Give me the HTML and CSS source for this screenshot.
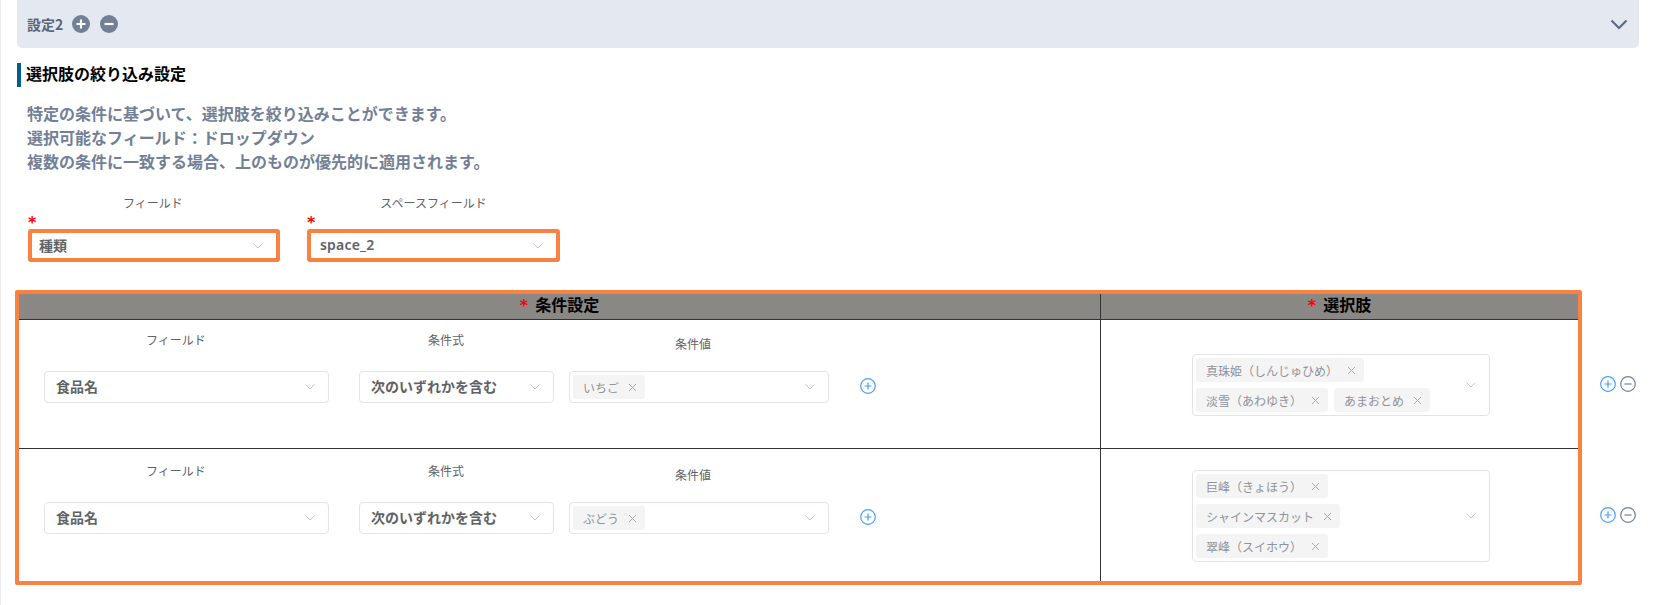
FILE: index.html
```html
<!DOCTYPE html>
<html lang="ja">
<head>
<meta charset="utf-8">
<title>設定</title>
<link rel="stylesheet" href="styles.css">
</head>
<body>
<div class="page">
  <header class="accordion">
    <span class="accordion-title">設定2</span>
    <svg class="round-btn" viewBox="0 0 18 18"><circle cx="9" cy="9" r="9" fill="#718096"/><path d="M9 4.5v9M4.5 9h9" stroke="#fff" stroke-width="2.2"/></svg>
    <svg class="round-btn" viewBox="0 0 18 18"><circle cx="9" cy="9" r="9" fill="#718096"/><path d="M4.5 9h9" stroke="#fff" stroke-width="2.2"/></svg>
    <svg class="accordion-chevron" viewBox="0 0 18 11"><path d="M1.5 1.5 9 9l7.5-7.5" fill="none" stroke="#5d6b82" stroke-width="2.2"/></svg>
  </header>

  <h2 class="section-title">選択肢の絞り込み設定</h2>

  <div class="desc">
    <div>特定の条件に基づいて、選択肢を絞り込みことができます。</div>
    <div>選択可能なフィールド：ドロップダウン</div>
    <div>複数の条件に一致する場合、上のものが優先的に適用されます。</div>
  </div>

  <div class="top-fields">
    <div class="top-field">
      <div class="top-label">フィールド</div>
      <div class="star">*</div>
      <div class="sel sel-hl"><span class="sel-text">種類</span><svg class="chev" viewBox="0 0 10 6"><path d="M.5.5 5 5 9.500.5" fill="none" stroke="#c4c6cc" stroke-width="1"/></svg></div>
    </div>
    <div class="top-field top-field-2">
      <div class="top-label">スペースフィールド</div>
      <div class="star">*</div>
      <div class="sel sel-hl sel-hl-latin"><span class="sel-text sel-latin">space_2</span><svg class="chev" viewBox="0 0 10 6"><path d="M.5.5 5 5 9.500.5" fill="none" stroke="#c4c6cc" stroke-width="1"/></svg></div>
    </div>
  </div>

  <div class="table-area">
    <div class="table">
      <div class="th th-cond"><span class="req">*</span>条件設定</div>
      <div class="th th-choice"><span class="req">*</span>選択肢</div>

      <div class="td td-cond">
        <div class="field f-name">
          <div class="flabel">フィールド</div>
          <div class="sel"><span class="sel-text">食品名</span><svg class="chev" viewBox="0 0 10 6"><path d="M.5.5 5 5 9.500.5" fill="none" stroke="#c4c6cc" stroke-width="1"/></svg></div>
        </div>
        <div class="field f-op">
          <div class="flabel">条件式</div>
          <div class="sel"><span class="sel-text">次のいずれかを含む</span><svg class="chev" viewBox="0 0 10 6"><path d="M.5.5 5 5 9.500.5" fill="none" stroke="#c4c6cc" stroke-width="1"/></svg></div>
        </div>
        <div class="field f-val">
          <div class="flabel flabel-low">条件値</div>
          <div class="sel sel-multi"><span class="tag">いちご<svg class="x" viewBox="0 0 9 9"><path d="M1 1l7 7M8 1 1 8" stroke="#a6a9ad" stroke-width="1"/></svg></span><svg class="chev" viewBox="0 0 10 6"><path d="M.5.5 5 5 9.500.5" fill="none" stroke="#c4c6cc" stroke-width="1"/></svg></div>
        </div>
        <div class="add-wrap">
          <svg class="icon16" viewBox="0 0 16 16"><circle cx="8" cy="8" r="7.3" fill="none" stroke="#4a9ff5" stroke-width="1.2"/><path d="M8 4.500v7M4.500 8h7" stroke="#4a9ff5" stroke-width="1.200"/></svg>
        </div>
      </div>
      <div class="td td-choice td-choice-1">
        <div class="sel sel-choice">
          <div class="tags">
            <span class="tag">真珠姫（しんじゅひめ）<svg class="x" viewBox="0 0 9 9"><path d="M1 1l7 7M8 1 1 8" stroke="#a6a9ad" stroke-width="1"/></svg></span>
            <span class="tag">淡雪（あわゆき）<svg class="x" viewBox="0 0 9 9"><path d="M1 1l7 7M8 1 1 8" stroke="#a6a9ad" stroke-width="1"/></svg></span>
            <span class="tag">あまおとめ<svg class="x" viewBox="0 0 9 9"><path d="M1 1l7 7M8 1 1 8" stroke="#a6a9ad" stroke-width="1"/></svg></span>
          </div>
          <svg class="chev" viewBox="0 0 10 6"><path d="M.5.5 5 5 9.500.5" fill="none" stroke="#c4c6cc" stroke-width="1"/></svg>
        </div>
      </div>

      <div class="td td-cond td-last">
        <div class="field f-name">
          <div class="flabel">フィールド</div>
          <div class="sel"><span class="sel-text">食品名</span><svg class="chev" viewBox="0 0 10 6"><path d="M.5.5 5 5 9.500.5" fill="none" stroke="#c4c6cc" stroke-width="1"/></svg></div>
        </div>
        <div class="field f-op">
          <div class="flabel">条件式</div>
          <div class="sel"><span class="sel-text">次のいずれかを含む</span><svg class="chev" viewBox="0 0 10 6"><path d="M.5.5 5 5 9.500.5" fill="none" stroke="#c4c6cc" stroke-width="1"/></svg></div>
        </div>
        <div class="field f-val">
          <div class="flabel flabel-low">条件値</div>
          <div class="sel sel-multi"><span class="tag">ぶどう<svg class="x" viewBox="0 0 9 9"><path d="M1 1l7 7M8 1 1 8" stroke="#a6a9ad" stroke-width="1"/></svg></span><svg class="chev" viewBox="0 0 10 6"><path d="M.5.5 5 5 9.500.5" fill="none" stroke="#c4c6cc" stroke-width="1"/></svg></div>
        </div>
        <div class="add-wrap">
          <svg class="icon16" viewBox="0 0 16 16"><circle cx="8" cy="8" r="7.3" fill="none" stroke="#4a9ff5" stroke-width="1.2"/><path d="M8 4.500v7M4.500 8h7" stroke="#4a9ff5" stroke-width="1.200"/></svg>
        </div>
      </div>
      <div class="td td-choice td-last">
        <div class="sel sel-choice">
          <div class="tags">
            <span class="tag">巨峰（きょほう）<svg class="x" viewBox="0 0 9 9"><path d="M1 1l7 7M8 1 1 8" stroke="#a6a9ad" stroke-width="1"/></svg></span>
            <span class="tag">シャインマスカット<svg class="x" viewBox="0 0 9 9"><path d="M1 1l7 7M8 1 1 8" stroke="#a6a9ad" stroke-width="1"/></svg></span>
            <span class="tag">翠峰（スイホウ）<svg class="x" viewBox="0 0 9 9"><path d="M1 1l7 7M8 1 1 8" stroke="#a6a9ad" stroke-width="1"/></svg></span>
          </div>
          <svg class="chev" viewBox="0 0 10 6"><path d="M.5.5 5 5 9.500.5" fill="none" stroke="#c4c6cc" stroke-width="1"/></svg>
        </div>
      </div>
    </div>

    <div class="row-actions">
      <div class="action-row action-row-1">
        <svg class="icon16" viewBox="0 0 16 16"><circle cx="8" cy="8" r="7.3" fill="none" stroke="#4a9ff5" stroke-width="1.2"/><path d="M8 4.500v7M4.500 8h7" stroke="#4a9ff5" stroke-width="1.200"/></svg>
        <svg class="icon16" viewBox="0 0 16 16"><circle cx="8" cy="8" r="7.3" fill="none" stroke="#718096" stroke-width="1.2"/><path d="M4.500 8h7" stroke="#718096" stroke-width="1.200"/></svg>
      </div>
      <div class="action-row action-row-2">
        <svg class="icon16" viewBox="0 0 16 16"><circle cx="8" cy="8" r="7.3" fill="none" stroke="#4a9ff5" stroke-width="1.2"/><path d="M8 4.500v7M4.500 8h7" stroke="#4a9ff5" stroke-width="1.200"/></svg>
        <svg class="icon16" viewBox="0 0 16 16"><circle cx="8" cy="8" r="7.3" fill="none" stroke="#718096" stroke-width="1.2"/><path d="M4.500 8h7" stroke="#718096" stroke-width="1.200"/></svg>
      </div>
    </div>
  </div>
</div>
</body>
</html>
```
FILE: styles.css
```css
* { box-sizing: border-box; }
html, body { margin: 0; padding: 0; background: #fff; }
body {
  font-family: "Noto Sans CJK JP", "Noto Sans", sans-serif;
  font-size: 13px;
  color: #555;
  overflow: hidden;
}
.page {
  width: 1655px;
  height: 605px;
  border-left: 1px solid #ececec;
  padding-left: 16px;
}

/* accordion header */
.accordion {
  width: 1622px;
  height: 48px;
  background: #e3e8f1;
  border-radius: 0 0 5px 5px;
  display: flex;
  align-items: center;
  padding: 0 11px 0 10px;
  gap: 9px;
}
.accordion-title { font-size: 14px; font-weight: 700; color: #5a6577; line-height: 18px; }
.round-btn { width: 18px; height: 18px; }
.round-btn + .round-btn { margin-left: 1px; }
.accordion-chevron { width: 18px; height: 11px; margin-left: auto; }

/* section title */
.section-title {
  margin: 15px 0 0;
  height: 24px;
  border-left: 4px solid #005f8f;
  padding-left: 5px;
  font-size: 16px;
  line-height: 21px;
  font-weight: 700;
  color: #000;
}

.desc {
  margin: 14px 0 0 10px;
  font-size: 16px;
  font-weight: 700;
  line-height: 24px;
  color: #718096;
}

/* top selects */
.top-fields {
  display: flex;
  margin: 20px 0 0 11px;
  gap: 27px;
}
.top-field { width: 252px; }
.top-field-2 { width: 253px; }
.top-label { text-align: center; font-size: 12px; line-height: 20px; color: #606266; padding-right: 2px; }
.top-field-2 .top-label { padding-right: 0; }
.star {
  color: #f00;
  font-family: "DejaVu Sans", sans-serif;
  font-size: 16px;
  font-weight: 700;
  line-height: 20px;
  height: 16px;
}

.sel {
  display: flex;
  align-items: center;
  justify-content: space-between;
  height: 32px;
  background: #fff;
  border: 1px solid #e3e3ec;
  border-radius: 4px;
  padding: 0 13px 0 11px;
}
.sel-hl {
  border: 4px solid #f98240;
  border-radius: 3px;
  height: 33px;
  padding: 0 13px 0 7px;
}
.sel-hl-latin { padding-left: 9px; }
.sel-text { font-size: 14px; font-weight: 700; color: #606266; line-height: 20px; margin-bottom: 2px; }
.sel-latin { font-family: "Noto Sans", sans-serif; font-weight: 600; letter-spacing: .2px; }
.chev { width: 10px; height: 6px; flex: none; }

/* table */
.table-area { display: flex; margin: 28px 0 0 -2px; }
.table {
  width: 1567px;
  height: 295px;
  border: 4px solid #f98240;
  border-radius: 2px;
  display: grid;
  grid-template-columns: 1082px 1fr;
  grid-template-rows: 26px 129px 1fr;
}
.th {
  background: #8a8885;
  border-bottom: 1px solid #333;
  color: #000;
  font-size: 16px;
  font-weight: 700;
  line-height: 20px;
  text-align: center;
}
.th-cond { border-right: 1px solid #333; }
.req {
  color: #f00;
  font-family: "DejaVu Sans", sans-serif;
  font-size: 16px;
  font-weight: 700;
  line-height: 0;
  margin-right: 7px;
}
.td { border-bottom: 1px solid #333; }
.td-last { border-bottom: 0; }
.td-cond {
  border-right: 1px solid #333;
  display: flex;
  align-items: flex-start;
  padding-left: 25px;
}
.td-cond.td-last { padding-top: 2px; }
.td-choice { display: flex; align-items: center; justify-content: center; padding: 2px 0 0 3px; }

.field { flex: none; }
.f-name { width: 285px; margin-right: 30px; }
.f-op { width: 195px; margin-right: 15px; }
.f-val { width: 260px; margin-right: 31px; }
.flabel {
  height: 51px;
  padding-top: 10px;
  font-size: 12px;
  line-height: 20px;
  text-align: center;
  color: #606266;
}
.f-name .flabel { width: 264px; }
.f-op .flabel { width: 174px; }
.f-val .flabel { width: 248px; }
.f-val .flabel-low { padding-top: 14px; }
.sel-multi { padding-left: 3px; }
.add-wrap { margin-top: 50px; height: 32px; display: flex; align-items: center; }
.icon16 { width: 16px; height: 16px; flex: none; }

.tag {
  display: inline-flex;
  align-items: center;
  height: 24px;
  background: #f4f4f5;
  border-radius: 3px;
  padding: 0 8px 0 10px;
  color: #909399;
  font-size: 12px;
  font-weight: 400;
  white-space: nowrap;
}
.x { width: 9px; height: 9px; margin-left: 9px; flex: none; }

.sel-choice {
  width: 298px;
  height: auto;
  padding: 3px 13px 3px 3px;
}
.tags { display: flex; flex-wrap: wrap; gap: 6px; width: 250px; }

/* row actions */
.row-actions { width: 56px; padding-left: 18px; }
.action-row { display: flex; gap: 4px; }
.action-row-1 { margin-top: 86px; }
.action-row-2 { margin-top: 115px; }
```
